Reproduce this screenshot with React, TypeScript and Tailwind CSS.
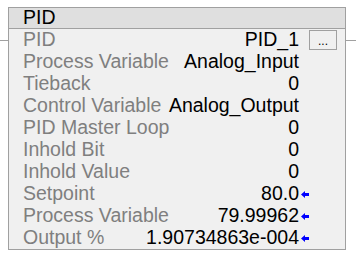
const rows: { label: string; value: string; arrow?: boolean; browse?: boolean }[] = [
  { label: "PID", value: "PID_1", browse: true },
  { label: "Process Variable", value: "Analog_Input" },
  { label: "Tieback", value: "0" },
  { label: "Control Variable", value: "Analog_Output" },
  { label: "PID Master Loop", value: "0" },
  { label: "Inhold Bit", value: "0" },
  { label: "Inhold Value", value: "0" },
  { label: "Setpoint", value: "80.0", arrow: true },
  { label: "Process Variable", value: "79.99962", arrow: true },
  { label: "Output %", value: "1.90734863e-004", arrow: true },
];

function Arrow() {
  return (
    <svg width="8" height="7" viewBox="0 0 8 7" className="ml-[2px]">
      <path d="M0 3.5 L4 0 L4 2 L8 2 L8 5 L4 5 L4 7 Z" fill="#0000ff" />
    </svg>
  );
}

export default function App() {
  return (
    <div
      className="w-[356px] h-[259px] bg-white flex items-start pt-[7px]"
      style={{ fontFamily: '"Liberation Sans", Arial, sans-serif' }}
    >
      <div className="w-[8px] h-px bg-[#a0a0a0] mt-[33px]" />
      <div className="w-[338px] border border-[#a0a0a0] bg-[#f0f0f0]">
        <div className="h-[21px] bg-[#dfdfdf] border-b border-[#a0a0a0] pl-[14px] flex items-center text-[19.5px] leading-none text-black">
          PID
        </div>
        {rows.map((r, i) => (
          <div key={i} className="h-[22px] flex items-center pl-[14px] text-[19.5px] leading-none">
            <span className="flex-1 text-[#7f7f7f] whitespace-nowrap">{r.label}</span>
            <span className="text-black whitespace-nowrap">{r.value}</span>
            <span className="w-[10px] flex items-center">{r.arrow && <Arrow />}</span>
            <span className="w-[28px] mr-[8px] flex items-center">
              {r.browse && (
                <span className="w-[28px] h-[20px] border border-[#a0a0a0] bg-[#f0f0f0] flex items-end justify-center pb-[2px] text-[12px] leading-none text-black">
                  ...
                </span>
              )}
            </span>
          </div>
        ))}
      </div>
      <div className="flex-1 h-px bg-[#a0a0a0] mt-[33px]" />
    </div>
  );
}
